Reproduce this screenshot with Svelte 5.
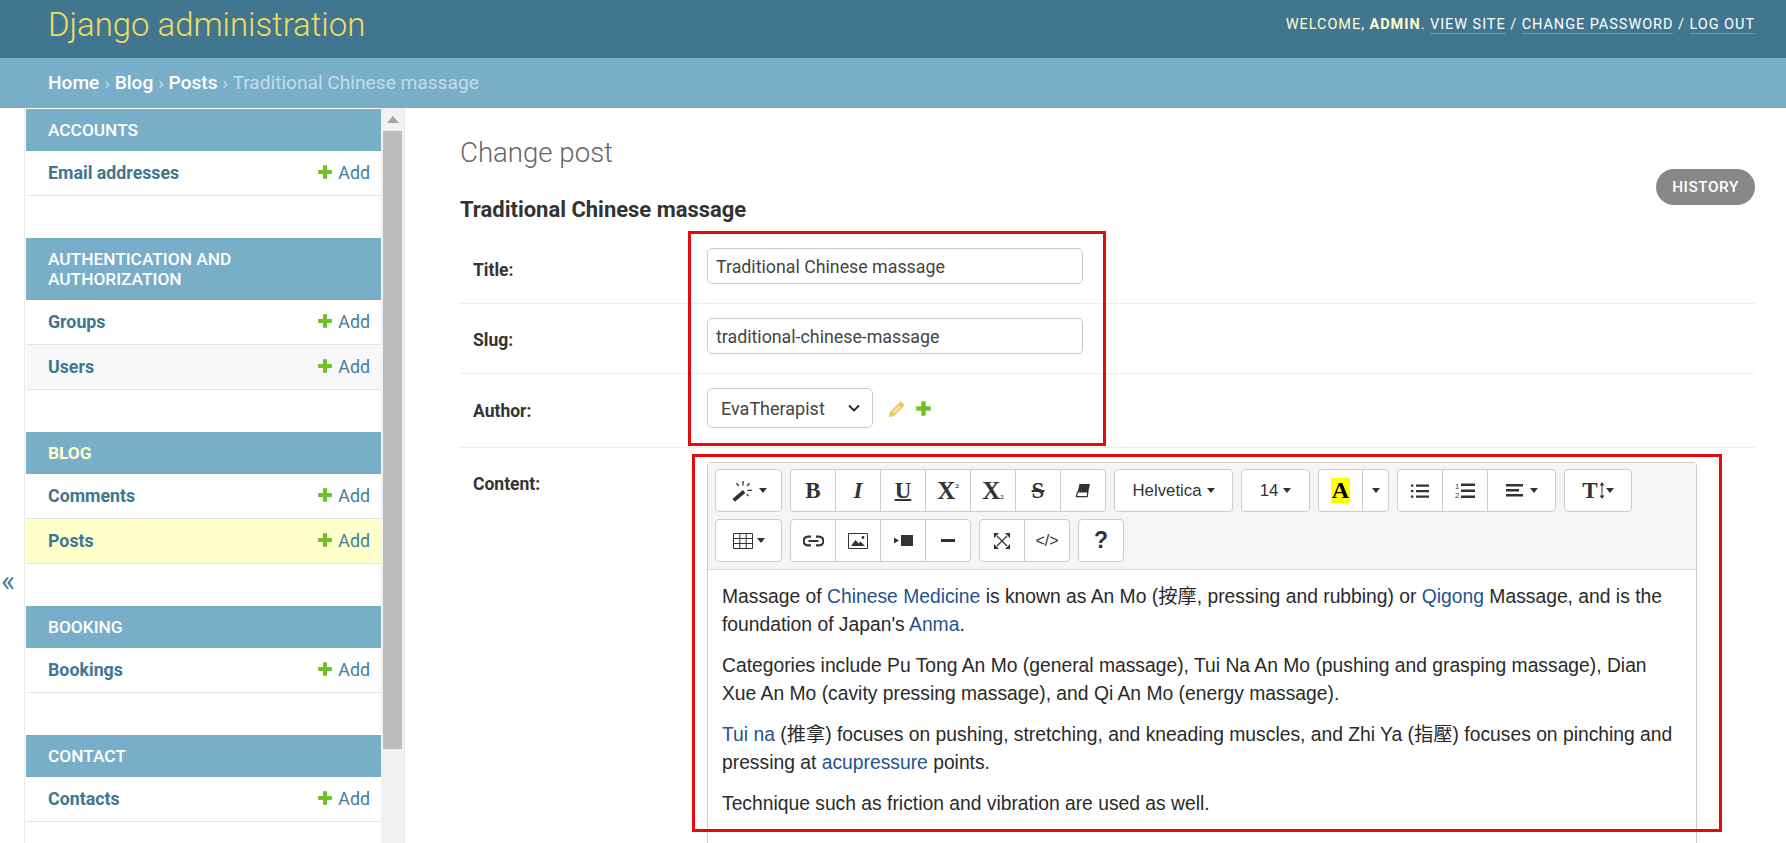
<script>
  const modules = [
    { name: 'Accounts', rows: ['Email addresses'] },
    { name: 'Authentication and Authorization', rows: ['Groups', 'Users'] },
    { name: 'Blog', rows: ['Comments', 'Posts'], current: true },
    { name: 'Booking', rows: ['Bookings'] },
    { name: 'Contact', rows: ['Contacts'] },
  ];
</script>

{#snippet plus(size)}
  <svg width={size} height={size} viewBox="0 0 14 14"><path fill="#70bf2b" d="M5.2 1h3.6v4.2H13v3.6H8.8V13H5.2V8.8H1V5.2h4.2z"/></svg>
{/snippet}

<div class="page">
  <header class="top">
    <div class="brand">Django administration</div>
    <div class="tools">
      WELCOME, <strong>ADMIN</strong>. <a>VIEW SITE</a> / <a>CHANGE PASSWORD</a> / <a>LOG OUT</a>
    </div>
  </header>
  <div class="crumbs">
    <a>Home</a> › <a>Blog</a> › <a>Posts</a> › Traditional Chinese massage
  </div>

  <div class="body">
    <div class="toggle">«</div>
    <nav class="side">
      <div class="modules">
        {#each modules as m}
          <section class="module" class:current={m.current}>
            <h3>{m.name}</h3>
            {#each m.rows as r, i}
              <div class="row" class:even={i % 2 === 1} class:active={r === 'Posts'}>
                <a class="model">{r}</a>
                <span class="add">{@render plus(16)} Add</span>
              </div>
            {/each}
          </section>
        {/each}
      </div>
      <div class="scroll">
        <span class="arrow"></span>
        <span class="thumb"></span>
      </div>
    </nav>

    <main class="content">
      <div class="titles">
        <div>
          <h1>Change post</h1>
          <h2>Traditional Chinese massage</h2>
        </div>
        <a class="history">HISTORY</a>
      </div>

      <div class="field">
        <label for="t">Title:</label>
        <input id="t" class="text" value="Traditional Chinese massage" />
      </div>
      <div class="field">
        <label for="s">Slug:</label>
        <input id="s" class="text" value="traditional-chinese-massage" />
      </div>
      <div class="field author">
        <label for="a">Author:</label>
        <div class="select-wrap">
          <select id="a"><option>EvaTherapist</option></select>
          <svg class="chev" width="12" height="8" viewBox="0 0 12 8"><path d="M1 1.5l5 5 5-5" fill="none" stroke="#222" stroke-width="1.8"/></svg>
        </div>
        <svg class="pencil" width="19" height="19" viewBox="0 0 17 17">
          <path fill="#efc65a" d="M12.2 1.2l3.6 3.6-9.6 9.6-4.6 1 1-4.6z"/>
          <path fill="#fff" opacity=".55" d="M11 4.6l1.4 1.4-6.4 6.4-1.4-1.4z"/>
        </svg>
        {@render plus(17)}
      </div>

      <div class="field content-row">
        <label for="e">Content:</label>
        <div class="editor">
          <div class="toolbar">
            <div class="tgroup"><button class="wide">
              <svg width="24" height="22" viewBox="0 0 20 20"><path d="M1.5 18.5l9.5-8" stroke="#333" stroke-width="3.4"/><path d="M10 1v4M4 3l2.2 2.6M16 3l-2.4 2.4M14 9.5h4M13.5 13l1.5 1.5" stroke="#333" stroke-width="1.2" fill="none"/></svg>
              <span class="caret"></span>
            </button></div>
            <div class="tgroup">
              <button class="g serif b">B</button>
              <button class="g serif it">I</button>
              <button class="g serif b u">U</button>
              <button class="g serif b x">X<sup>2</sup></button>
              <button class="g serif b x">X<sub>2</sub></button>
              <button class="g serif b st">S</button>
              <button class="g">
                <svg width="16" height="15" viewBox="0 0 16 15"><path fill="#333" d="M4.5 1H15l-2 9H2.4z"/><path fill="#fff" stroke="#333" stroke-width="1.2" d="M2.4 9h10.4l-.6 4.6H1.4z"/></svg>
              </button>
            </div>
            <div class="tgroup"><button class="font">Helvetica <span class="caret sm"></span></button></div>
            <div class="tgroup"><button class="size">14 <span class="caret sm"></span></button></div>
            <div class="tgroup">
              <button class="hl"><span class="mark">A</span></button>
              <button class="hl-c"><span class="caret sm"></span></button>
            </div>
            <div class="tgroup">
              <button class="g">
                <svg width="18" height="16" viewBox="0 0 18 16"><path fill="#333" d="M5 1.5h13v2.2H5zM5 7h13v2.2H5zM5 12.5h13v2.2H5zM0 1.5h2.4v2.2H0zM0 7h2.4v2.2H0zM0 12.5h2.4v2.2H0z"/></svg>
              </button>
              <button class="g">
                <svg width="20" height="18" viewBox="0 0 20 18"><path fill="#333" d="M6 1.5h14v2.4H6zM6 7.5h14v2.4H6zM6 13.5h14v2.4H6z"/><text x="0" y="7" font-size="7.5" fill="#333" font-family="Liberation Sans">1</text><text x="0" y="16" font-size="7.5" fill="#333" font-family="Liberation Sans">2</text></svg>
              </button>
              <button class="align">
                <svg width="17" height="13" viewBox="0 0 17 13"><path fill="#333" d="M0 0h17v2.4H0zM0 5h13v2.4H0zM0 10h17v2.4H0z"/></svg>
                <span class="caret sm"></span>
              </button>
            </div>
            <div class="tgroup"><button class="height serif b">T<svg width="6" height="17" viewBox="0 0 6 17"><path d="M3 3v11" stroke="#333" stroke-width="1"/><path fill="#333" d="M3 0l2.4 3.6H.6zM3 17l2.4-3.6H.6z"/></svg><span class="caret sm"></span></button></div>

            <div class="tgroup"><button class="wide">
              <svg width="20" height="16" viewBox="0 0 20 16"><path fill="none" stroke="#333" d="M.5.5h19v15H.5zM.5 5.5h19M.5 10.5h19M6.8.5v15M13.2.5v15"/></svg>
              <span class="caret"></span>
            </button></div>
            <div class="tgroup">
              <button class="g">
                <svg width="21" height="12" viewBox="0 0 21 12"><path fill="none" stroke="#333" stroke-width="2.2" d="M8 1.6H5a4.4 4.4 0 0 0 0 8.8h3M13 1.6h3a4.4 4.4 0 0 1 0 8.8h-3M5.5 6h10"/></svg>
              </button>
              <button class="g">
                <svg width="20" height="16" viewBox="0 0 20 16"><path fill="none" stroke="#333" d="M.5.5h19v15H.5z"/><path fill="#333" d="M3 13l4.5-6 3 3.4 2-2L17 13z"/><circle cx="15" cy="4.5" r="1.4" fill="#333"/></svg>
              </button>
              <button class="g">
                <svg width="19" height="12" viewBox="0 0 19 12"><path fill="#333" d="M7 0h12v11H7zM0 2.5l5 3-5 3z"/></svg>
              </button>
              <button class="g">
                <svg width="14" height="4" viewBox="0 0 14 4"><rect width="14" height="3" fill="#333"/></svg>
              </button>
            </div>
            <div class="tgroup">
              <button class="g">
                <svg width="16" height="16" viewBox="0 0 16 16"><path fill="none" stroke="#333" stroke-width="1.2" d="M3 3l10 10M13 3L3 13"/><path fill="#333" d="M0 0h5L0 5zM16 0v5l-5-5zM0 16v-5l5 5zM16 16h-5l5-5z"/></svg>
              </button>
              <button class="g code">&lt;/&gt;</button>
            </div>
            <div class="tgroup"><button class="g help">?</button></div>
          </div>

          <div class="text-area">
            <p>Massage of <a>Chinese Medicine</a> is known as An Mo (按摩, pressing and rubbing) or <a>Qigong</a> Massage, and is the foundation of Japan's <a>Anma</a>.</p>
            <p>Categories include Pu Tong An Mo (general massage), Tui Na An Mo (pushing and grasping massage), Dian Xue An Mo (cavity pressing massage), and Qi An Mo (energy massage).</p>
            <p><a>Tui na</a> (推拿) focuses on pushing, stretching, and kneading muscles, and Zhi Ya (指壓) focuses on pinching and pressing at <a>acupressure</a> points.</p>
            <p>Technique such as friction and vibration are used as well.</p>
          </div>
        </div>
      </div>
    </main>
  </div>

  <div class="mark-box one"></div>
  <div class="mark-box two"></div>
</div>

<style>
  :global(body) { margin: 0; background: #fff; }
  .page { position: relative; height: 843px; overflow: hidden; font-family: Roboto, "Liberation Sans", sans-serif; color: #333; }

  .top { height: 58px; background: #417690; display: flex; align-items: center; justify-content: space-between; padding: 0 31px 0 48px; box-sizing: border-box; }
  .brand { font-size: 32.9px; font-weight: 300; color: #f5dd5d; margin-top: -10px; }
  .tools { font-size: 14.5px; font-weight: 400; letter-spacing: .95px; color: #ffc; margin-top: -10px; }
  .tools strong { font-weight: 700; }
  .tools a { color: #fff; border-bottom: 1px solid rgba(255,255,255,.25); }

  .crumbs { height: 50px; background: #79aec8; padding-left: 48px; display: flex; align-items: center; font-size: 19.15px; color: #c4dce8; box-sizing: border-box; white-space: pre-wrap; padding-bottom: 2px; }
  .crumbs a { color: #fff; font-weight: 500; }

  .body { display: flex; height: 735px; }
  .toggle { flex: 0 0 24px; font-size: 30px; color: #447e9b; display: flex; align-items: center; padding: 210px 0 0 1px; box-sizing: border-box; }

  .side { flex: 0 0 381px; display: flex; border-left: 1px solid #eaeaea; border-right: 1px solid #eaeaea; box-sizing: border-box; overflow: hidden; }
  .modules { flex: 1; padding: 1px 0 0 1px; min-width: 0; }
  .module { margin-bottom: 42px; }
  .module h3 { margin: 0; background: #79aec8; color: #fff; font-size: 17.3px; font-weight: 500; line-height: 20px; padding: 11px 22px; text-transform: uppercase; }
  .module.current h3 { color: #ffc; font-weight: 700; }
  .row { height: 45px; box-sizing: border-box; border-bottom: 1px solid #e4e4e4; display: flex; align-items: center; justify-content: space-between; padding: 0 11px 2px 22px; font-size: 17.8px; }
  .row.even { background: #f8f8f8; }
  .row.active { background: #ffc; }
  .model { color: #417690; font-weight: 700; }
  .add { color: #447e9b; display: flex; align-items: center; gap: 5px; font-weight: 400; }

  .scroll { flex: 0 0 23px; background: #f1f1f1; display: flex; flex-direction: column; align-items: center; }
  .arrow { margin: 8px 0 5px; width: 0; height: 0; border: 6px solid transparent; border-top: 0; border-bottom: 7px solid #a3a3a3; }
  .thumb { width: 19px; height: 618px; margin-top: 3px; background: #bcbcbc; }

  .content { flex: 1; min-width: 0; padding: 0 31px 0 55px; }
  .titles { display: flex; justify-content: space-between; height: 125px; }
  h1 { margin: 28px 0 0; font-size: 27.6px; font-weight: 300; color: #666; line-height: 34px; }
  h2 { margin: 26px 0 0; font-size: 21.96px; font-weight: 700; color: #333; line-height: 28px; }
  .history { align-self: flex-start; margin-top: 61px; height: 36px; width: 99px; border-radius: 18px; background: #888; color: #fff; font-size: 15.4px; font-weight: 500; letter-spacing: .5px; display: flex; align-items: center; justify-content: center; }

  .field { display: flex; align-items: flex-start; padding: 14px 0 19px 13px; border-bottom: 1px solid #eee; }
  .field:nth-of-type(2) { padding-top: 15px; }
  .field label { flex: 0 0 234px; font-size: 17.5px; font-weight: 700; color: #333; margin-top: 12px; }
  .text { width: 376px; height: 36px; box-sizing: border-box; border: 1px solid #ccc; border-radius: 5px; padding: 0 8px; font: 400 17.8px Roboto, sans-serif; color: #444; background: #fff; outline: none; }

  .author { align-items: center; }
  .author label { margin-top: 0; padding-top: 6px; }
  .select-wrap { position: relative; width: 166px; height: 40px; margin-right: 14px; }
  select { appearance: none; width: 100%; height: 100%; border: 1px solid #ccc; border-radius: 5px; padding: 0 13px; font: 400 18px Roboto, sans-serif; color: #444; background: #fff; }
  .chev { position: absolute; right: 13px; top: 16px; }
  .pencil { margin: 2px 9px 0 0; }

  .content-row { border-bottom: 0; }
  .editor { width: 990px; height: 500px; flex: none; box-sizing: border-box; border: 1px solid #ccc; border-radius: 4px 4px 0 0; }
  .toolbar { background: #f5f5f5; border-bottom: 1px solid #ddd; padding: 6px 0 7px 7px; display: flex; flex-wrap: wrap; gap: 7px 8px; }
  .tgroup { display: flex; height: 43px; }
  .tgroup button { height: 100%; box-sizing: border-box; background: #fff; border: 1px solid #ccc; margin-left: -1px; padding: 0; display: flex; align-items: center; justify-content: center; color: #333; font: 400 16.8px "Liberation Sans", sans-serif; }
  .tgroup button:first-child { margin-left: 0; border-radius: 4px 0 0 4px; }
  .tgroup button:last-child { border-radius: 0 4px 4px 0; }
  .tgroup button:only-child { border-radius: 4px; }
  .g { width: 46px; }
  .wide { width: 67px; gap: 4px; }
  .font { width: 119px; gap: 5px; }
  .size { width: 69px; gap: 5px; }
  .hl { width: 45px; }
  .hl-c { width: 27px; }
  .align { width: 69px; gap: 7px; }
  .height { width: 68px; gap: 1px; }
  .tgroup .serif { font-family: "Liberation Serif", serif; font-size: 23px; }
  .tgroup .b { font-weight: 700; }
  .tgroup .it { font-style: italic; font-weight: 700; }
  .tgroup .u { text-decoration: underline; text-decoration-thickness: 1.5px; }
  .tgroup .st { text-decoration: line-through; }
  .tgroup .x { font-size: 25px; }
  .tgroup .x sup, .tgroup .x sub { font-size: 7px; line-height: 0; }
  .tgroup .x sup { margin-top: -10px; }
  .tgroup .x sub { margin-top: 12px; }
  .mark { background: #ff0; color: #000; font: 700 24px "Liberation Serif", serif; line-height: 25px; padding: 0 1px; }
  .tgroup .code { font-size: 16px; }
  .tgroup .help { font-size: 23px; font-weight: 700; }
  .caret { width: 0; height: 0; border-left: 4.5px solid transparent; border-right: 4.5px solid transparent; border-top: 5.5px solid #333; }
  .caret.sm { border-left-width: 4px; border-right-width: 4px; border-top-width: 5px; }

  .text-area { padding: 13px 14px 0; font: 400 19.3px/27.9px "Liberation Sans", "Noto Sans CJK TC", sans-serif; color: #2a2a2a; }
  .text-area p { margin: 0 0 13.2px; }
  .text-area a { color: #245390; }

  .mark-box { position: absolute; box-sizing: border-box; border: 3px solid #e30b0b; pointer-events: none; }
  .one { left: 688px; top: 231px; width: 418px; height: 215px; }
  .two { left: 692px; top: 454px; width: 1030px; height: 378px; }
</style>
